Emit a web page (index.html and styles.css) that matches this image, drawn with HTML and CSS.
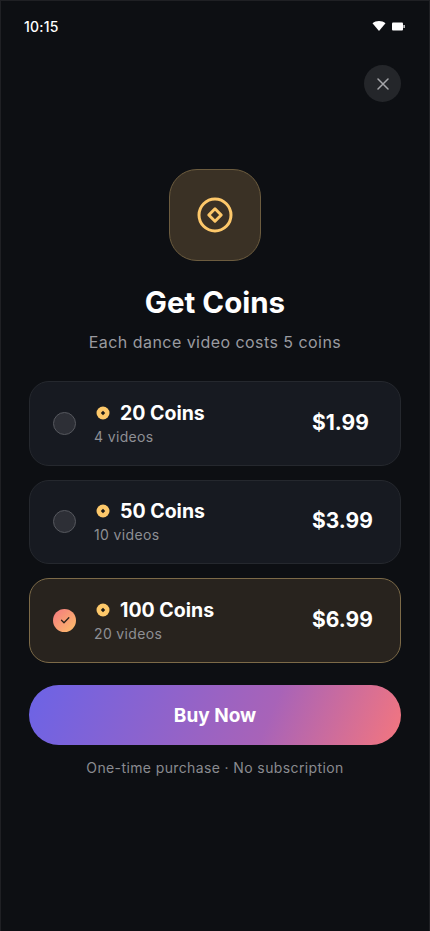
FILE: index.html
```html
<!DOCTYPE html>
<html lang="en">
<head>
<meta charset="utf-8">
<title>Get Coins</title>
<link rel="stylesheet" href="styles.css">
</head>
<body>
<div class="screen">
  <div class="status">
    <span class="time">10:15</span>
    <span class="status-icons">
      <svg width="14" height="12" viewBox="0 0 14 12"><path d="M0.5 3.2C2.3 1.7 4.5 0.9 7 0.9s4.700.8 6.500 2.300L7 11z" fill="#fff"/></svg>
      <svg width="13" height="9" viewBox="0 0 13 9"><rect x="0" y="0.500" width="11" height="8" rx="1" fill="#fff"/><rect x="11.500" y="3" width="1.200" height="3" fill="#fff"/></svg>
    </span>
  </div>
  <div class="close-row">
    <button class="close" aria-label="Close">
      <svg width="12" height="12" viewBox="0 0 12 12"><path d="M1 1l10 10M11 1L1 11" stroke="#a5a6aa" stroke-width="1.500" stroke-linecap="round"/></svg>
    </button>
  </div>
  <div class="hero">
    <svg width="36" height="36" viewBox="0 0 36 36" fill="none"><circle cx="18" cy="18" r="16" stroke="#fdc86a" stroke-width="3"/><path d="M18 11.800L24.200 18 18 24.200 11.800 18z" stroke="#fdc86a" stroke-width="3" stroke-linejoin="round"/></svg>
  </div>
  <h1 class="title">Get Coins</h1>
  <p class="subtitle">Each dance video costs 5 coins</p>
  <div class="plans">
    <div class="plan">
      <span class="radio"></span>
      <div class="info">
        <div class="name"><svg class="coin" width="14" height="14" viewBox="0 0 14 14"><circle cx="7" cy="7" r="6.500" fill="#fdc86a"/><path d="M7 4.800L9.200 7 7 9.200 4.800 7z" fill="#1c1a17"/></svg>20 Coins</div>
        <div class="videos">4 videos</div>
      </div>
      <span class="price">$1.99</span>
    </div>
    <div class="plan">
      <span class="radio"></span>
      <div class="info">
        <div class="name"><svg class="coin" width="14" height="14" viewBox="0 0 14 14"><circle cx="7" cy="7" r="6.500" fill="#fdc86a"/><path d="M7 4.800L9.200 7 7 9.200 4.800 7z" fill="#1c1a17"/></svg>50 Coins</div>
        <div class="videos">10 videos</div>
      </div>
      <span class="price">$3.99</span>
    </div>
    <div class="plan selected">
      <span class="radio checked"><svg width="12" height="12" viewBox="0 0 12 12" fill="none"><path d="M2.500 6.300L5 8.700 9.800 3.800" stroke="#2a211b" stroke-width="1.300" stroke-linecap="round" stroke-linejoin="round"/></svg></span>
      <div class="info">
        <div class="name"><svg class="coin" width="14" height="14" viewBox="0 0 14 14"><circle cx="7" cy="7" r="6.500" fill="#fdc86a"/><path d="M7 4.800L9.200 7 7 9.200 4.800 7z" fill="#1c1a17"/></svg>100 Coins</div>
        <div class="videos">20 videos</div>
      </div>
      <span class="price">$6.99</span>
    </div>
  </div>
  <button class="buy">Buy Now</button>
  <p class="note">One-time purchase · No subscription</p>
</div>
</body>
</html>
```
FILE: styles.css
```css
* { box-sizing: border-box; }
html, body { margin: 0; padding: 0; background: #0d0f13; }
body { font-family: Inter, "Noto Sans", sans-serif; color: #fff; }
.screen {
  width: 430px; height: 931px; overflow: hidden;
  border: 1px solid #1f2024; border-bottom: 0;
  display: flex; flex-direction: column; align-items: center;
}
.status {
  width: 100%; height: 36px; padding: 14px 24px 0 23px;
  display: flex; justify-content: space-between; align-items: center;
}
.time { font-size: 14px; font-weight: 500; letter-spacing: 0.2px; }
.status-icons { display: flex; align-items: center; gap: 6px; }
.close-row { width: 100%; padding: 28px 28px 0; display: flex; justify-content: flex-end; }
.close {
  width: 37px; height: 37px; border: 0; padding: 0; border-radius: 50%;
  background: #24262a; display: flex; align-items: center; justify-content: center;
}
.hero {
  margin-top: 67px; width: 92px; height: 92px; border-radius: 28px;
  background: #3a3125; border: 1px solid #6c5c3f;
  display: flex; align-items: center; justify-content: center;
}
.title { margin: 23px 0 0; font-size: 29.500px; line-height: 36px; font-weight: 700; }
.subtitle { margin: 10px 0 0; font-size: 16px; line-height: 24px; color: #9a9ba0; letter-spacing: 0.45px; }
.plans { margin-top: 27px; width: 372px; display: flex; flex-direction: column; gap: 14px; }
.plan {
  height: 84.500px; border-radius: 20px; background: #171a21; border: 1px solid #25282e;
  padding: 0 28px 0 23px; display: flex; align-items: center;
}
.plan.selected { background: #28231e; border-color: #7c6a48; }
.radio {
  width: 23px; height: 23px; border-radius: 50%; flex: none;
  background: #2d2f36; border: 1px solid #56585e;
  display: flex; align-items: center; justify-content: center;
}
.radio.checked { background: linear-gradient(135deg, #f4787f, #fdc06a); border: 0; }
.info { flex: 1; margin-left: 18px; padding-top: 1px; }
.name { display: flex; align-items: center; font-size: 19.500px; line-height: 24px; font-weight: 700; }
.coin { margin: 0 10.500px 0 1.500px; flex: none; }
.videos { font-size: 14px; line-height: 20px; color: #8e8f94; margin-top: 2px; letter-spacing: 0.35px; }
.price { width: 60px; font-size: 21px; line-height: 24px; font-weight: 700; white-space: nowrap; margin-top: -1px; }
.buy {
  margin-top: 22.500px; width: 372px; height: 60px; border: 0; border-radius: 30px;
  background: linear-gradient(112deg, #6c63e6 0%, #a863b8 64%, #f4767e 100%);
  color: #fff; font: 700 19px Inter, sans-serif;
}
.note { margin: 13px 0 0; font-size: 14px; line-height: 20px; color: #8a8b90; letter-spacing: 0.38px; }
```
